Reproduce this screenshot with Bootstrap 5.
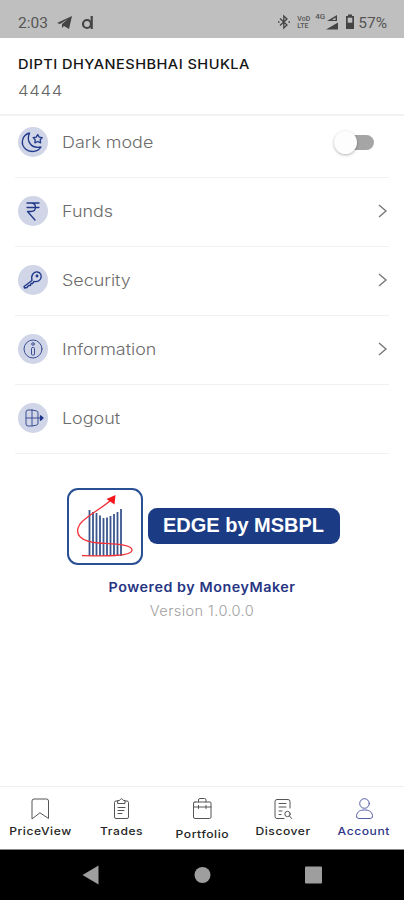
<!DOCTYPE html>
<html lang="en">
<head>
<meta charset="utf-8">
<meta name="viewport" content="width=device-width, initial-scale=1">
<title>Account</title>
<link rel="stylesheet" href="https://cdn.jsdelivr.net/npm/bootstrap@5.3.0/dist/css/bootstrap.min.css">
<style>
  body { font-family: Inter, "Liberation Sans", sans-serif; color: #6c6c6c; height: 900px; overflow: hidden; line-height: 1; }
  svg { display: block; flex: none; overflow: visible; }
  .status { height: 38px; background: #bfbfbf; color: #555; padding: 8px 17px 0 18px; font: 15.5px/30px Roboto, sans-serif; }
  .status .volte { font-size: 7px; line-height: 7px; font-weight: 500; padding-top: 8px; margin-left: 7px; }
  .status .net { font-size: 8px; line-height: 8px; font-weight: 500; padding-top: 5px; margin-left: 5px; }
  .profile { height: 78px; padding: 19px 18px 0; border-bottom: 2px solid #f1f1f1; }
  .profile h1 { font-size: 13px; line-height: 14px; font-weight: 500; color: #151515; letter-spacing: .42px; margin: 0 0 12px; }
  .client { font-size: 15px; line-height: 16px; font-weight: 300; letter-spacing: .6px; color: #666; }
  .wide { display: inline-block; transform: scaleX(1.12); transform-origin: left; }
  .menu { margin: 0 15px; }
  .menu-row { height: 69px; padding: 0 0 2px 3px; border-bottom: 1px solid #f1f1f1; font-size: 16px; font-weight: 300; gap: 14px; }
  .menu-row:first-child { height: 62px; padding-bottom: 9px; }
  .disc { width: 30px; height: 30px; background: #d0d5e7; flex: none; }
  .ink { fill: none; stroke: #20388a; stroke-width: 1.3; stroke-linecap: round; stroke-linejoin: round; }
  .ink .fine { stroke-width: 1; stroke: #3c4f94; }
  .switch-track { width: 30px; height: 15px; background: #a5a5a5; margin-right: 15px; }
  .switch-knob { width: 23px; height: 23px; background: #fdfdfd; margin-left: -10px; box-shadow: 0 1px 3px rgba(0,0,0,.3); flex: none; }
  .brand { padding: 34px 0 0 2px; gap: 5px; }
  .brand-name { width: 192px; height: 36px; border-radius: 9px; background: #1b3c85; color: #fff; margin-bottom: 2px; font: bold 20px "Liberation Sans", sans-serif; }
  .powered { margin-top: 15px; font-size: 13px; line-height: 15px; font-weight: 600; letter-spacing: .5px; color: #263583; transform: scaleX(1.1); }
  .version { margin-top: 8px; font-size: 14px; line-height: 15px; font-weight: 300; letter-spacing: .4px; color: #a0a0a0; transform: scaleX(1.04); }
  .tabs { height: 63px; border-top: 1px solid #eee; padding-top: 10px; color: #252525; font-size: 11px; font-weight: 500; }
  .tabs svg { fill: none; stroke: #555; stroke-width: 1; stroke-linejoin: round; stroke-linecap: round; }
  .tabs span { transform: scaleX(1.1); }
  .tab { width: 20%; gap: 5px; letter-spacing: .5px; }
  .tab.current { color: #30368a; }
  .tab.current svg { stroke: #555da5; }
  .sysnav { height: 51px; background: #000; border-top: 1px solid #888; padding: 0 81px; }
</style>
<script src="https://cdn.jsdelivr.net/npm/bootstrap@5.3.0/dist/js/bootstrap.bundle.min.js"></script>
</head>
<body class="d-flex flex-column bg-white">

<div class="status d-flex align-items-start justify-content-between">
  <div class="d-flex">
    <span>2:03</span>
    <svg class="ms-2" width="50" height="30" viewBox="0 0 50 30"><path d="M1 15 16 8 13 21 8 18 6 20 6 16 12 11 4 16Z" fill="#444"/><g fill="none" stroke="#444" stroke-width="2.2"><circle cx="31" cy="16" r="4"/><path d="M35.700 8v13"/></g></svg>
  </div>
  <div class="d-flex">
    <svg width="12" height="30" viewBox="0 0 12 30"><path d="M2 10.500 9 17 5.800 20V8L9 11 2 17.500M0 14h1.500M10.500 14H12" fill="none" stroke="#444" stroke-width="1.300"/></svg>
    <div class="volte">VoD<br>LTE</div>
    <div class="net">4G</div>
    <svg width="33" height="30" viewBox="0 0 33 30"><path d="M2 13 12 7V13ZM1 21.500 13 14.500V21.500Z" fill="#444"/><path d="M7.500 11.500 10.500 9.500V12H7.500Z" fill="#bfbfbf"/><path d="M21 8h2V6.500h4V8h2V21H21Z" fill="#444"/><path d="M22.700 9.700h4.600v5h-4.600z" fill="#bfbfbf"/></svg>
    <span>57%</span>
  </div>
</div>

<header class="profile">
  <h1><span class="wide">DIPTI DHYANESHBHAI SHUKLA</span></h1>
  <div class="client"><span class="wide">4444</span></div>
</header>

<main class="flex-grow-1">
  <div class="menu">
    <div class="menu-row d-flex align-items-center">
      <div class="disc rounded-circle"><svg class="ink" width="30" height="30" viewBox="0 0 30 30"><path d="M11.500 6C4 8 2 17 7.500 22 12 26 20 25 23 20 13 22 8 14 11.500 6Z"/><path d="m19.700 7.500 1.500 2.600 3 .5-2 2.200.4 3-2.900-1.300-2.800 1.300.3-3-2-2.200 3-.5Z"/></svg></div>
      <span class="wide me-auto">Dark mode</span>
      <div class="switch-track rounded-pill d-flex align-items-center"><div class="switch-knob rounded-circle"></div></div>
    </div>
    <div class="menu-row d-flex align-items-center">
      <div class="disc rounded-circle"><svg class="ink" width="30" height="30" viewBox="0 0 30 30"><path d="M9 7h12M9 11.500h12M9 7h4c6 0 6 8.500 0 8.500H9.500L17 24"/></svg></div>
      <span class="wide me-auto">Funds</span>
      <svg width="16" height="16" viewBox="0 0 16 16"><path d="m6 2 7 6-7 6" fill="none" stroke="#777" stroke-width="1.400"/></svg>
    </div>
    <div class="menu-row d-flex align-items-center">
      <div class="disc rounded-circle"><svg class="ink" width="30" height="30" viewBox="0 0 30 30"><path d="M14 15.500C12.500 10 16 6.500 19.500 7 23 7.500 24 11 22.500 14 21 16.500 18.500 17 16 16.500L14.500 18.500 13 18.500 12.500 20.500 10.500 20.500 9 22.500 6.500 23 6 21.500Z"/><circle cx="19" cy="11" r=".8"/></svg></div>
      <span class="wide me-auto">Security</span>
      <svg width="16" height="16" viewBox="0 0 16 16"><path d="m6 2 7 6-7 6" fill="none" stroke="#777" stroke-width="1.400"/></svg>
    </div>
    <div class="menu-row d-flex align-items-center">
      <div class="disc rounded-circle"><svg class="ink" width="30" height="30" viewBox="0 0 30 30"><g class="fine"><circle cx="15" cy="15" r="9"/><circle cx="15" cy="10" r="1.300"/><rect x="13.500" y="13.500" width="3" height="7.500" rx="1"/></g></svg></div>
      <span class="wide me-auto">Information</span>
      <svg width="16" height="16" viewBox="0 0 16 16"><path d="m6 2 7 6-7 6" fill="none" stroke="#777" stroke-width="1.400"/></svg>
    </div>
    <div class="menu-row d-flex align-items-center">
      <div class="disc rounded-circle"><svg class="ink" width="30" height="30" viewBox="0 0 30 30"><path class="fine" d="M14 7H10Q8 7 8 9V21Q8 23 10 23H14M14 7V23L19 22Q20 21.500 20 20V10Q20 8.500 19 8L14 7M8 15H24"/><path d="m22.500 12.800 2.500 2.200-2.500 2.200Z" fill="#20388a"/></svg></div>
      <span class="wide me-auto">Logout</span>
    </div>
  </div>

  <div class="brand d-flex justify-content-center align-items-center">
    <svg width="76" height="77" viewBox="0 0 76 77">
      <rect x="1" y="1" width="74" height="75" rx="10" fill="#fff" stroke="#285092" stroke-width="2"/>
      <path d="M22.500 22V68M26 24V68M29.500 25V68M33 27.500V68M36.500 30V68M40 29.500V68M43.500 28V68M47 26V68M50.500 24V68M54 21V68" stroke="#3a568f" stroke-width="1.800"/>
      <path d="M15 67.500C34 68 65 69 65 62 65 56 45 56 32 55 15 54 6 47 13 36 18 29 34 21 44 12" fill="none" stroke="#f23037" stroke-width="1.300"/>
      <path d="m39.500 11 9-4-1 9.500Z" fill="#f5161c"/>
    </svg>
    <div class="brand-name d-flex align-items-center justify-content-center"><span>EDGE by MSBPL</span></div>
  </div>
  <div class="powered text-center">Powered by MoneyMaker</div>
  <div class="version text-center">Version 1.0.0.0</div>
</main>

<nav class="tabs d-flex">
  <div class="tab d-flex flex-column align-items-center">
    <svg width="24" height="24" viewBox="0 0 24 24"><path d="M4 21.500V4Q4 2 6 2H18.500Q20.500 2 20.500 4V21.500L12.300 16Z"/></svg><span>PriceView</span>
  </div>
  <div class="tab d-flex flex-column align-items-center">
    <svg width="24" height="24" viewBox="0 0 24 24"><path d="M9 4H7Q5.500 4 5.500 5.500V20Q5.500 21.500 7 21.500H18Q19.500 21.500 19.500 20V5.500Q19.500 4 18 4H16M9 3.500H10.500Q12.500 0 14.500 3.500H16V6.500H9ZM9 10.500h7M9 13.500h6M9 16.500h4"/></svg><span>Trades</span>
  </div>
  <div class="tab d-flex flex-column align-items-center gap-2">
    <svg width="24" height="24" viewBox="0 0 24 24"><path d="M5 5H20Q21 5 21 6V20Q21 21.500 19.500 21.500H5Q3.500 21.500 3.500 20V6Q3.500 5 5 5ZM8.500 5V3Q8.500 1.500 10 1.500H14.500Q16 1.500 16 3V5M3.500 10H21M8.500 8.500v3M16 8.500v3"/></svg><span>Portfolio</span>
  </div>
  <div class="tab d-flex flex-column align-items-center">
    <svg width="24" height="24" viewBox="0 0 24 24"><path d="M13 21.500H6Q4 21.500 4 19.500V4.500Q4 2.500 6 2.500H17Q19 2.500 19 4.500V11M8 6.500H15M8 10H15M8 14H11M8 17.500h2"/><circle cx="16.500" cy="17" r="2.700"/><path d="m18.500 19 2.200 2.500"/></svg><span>Discover</span>
  </div>
  <div class="tab current d-flex flex-column align-items-center">
    <svg width="24" height="24" viewBox="0 0 24 24"><circle cx="12.500" cy="6.500" r="4.800"/><path d="M6.500 21.500Q4 21.500 4.500 18.500C5.500 14 8.500 13 12.500 13S19.500 14 20.500 18.500Q21 21.500 18.500 21.500Z"/></svg><span>Account</span>
  </div>
</nav>

<div class="sysnav d-flex justify-content-between align-items-center">
  <svg width="18" height="20" viewBox="0 0 18 20"><path d="M1.500 10 17.500.5V19.500Z" fill="#9e9e9e"/></svg>
  <svg width="18" height="18" viewBox="0 0 18 18"><circle cx="9.500" cy="9" r="8" fill="#9e9e9e"/></svg>
  <svg width="18" height="18" viewBox="0 0 18 18"><rect x="0" y=".5" width="17" height="17" rx="1" fill="#9e9e9e"/></svg>
</div>
</body>
</html>
